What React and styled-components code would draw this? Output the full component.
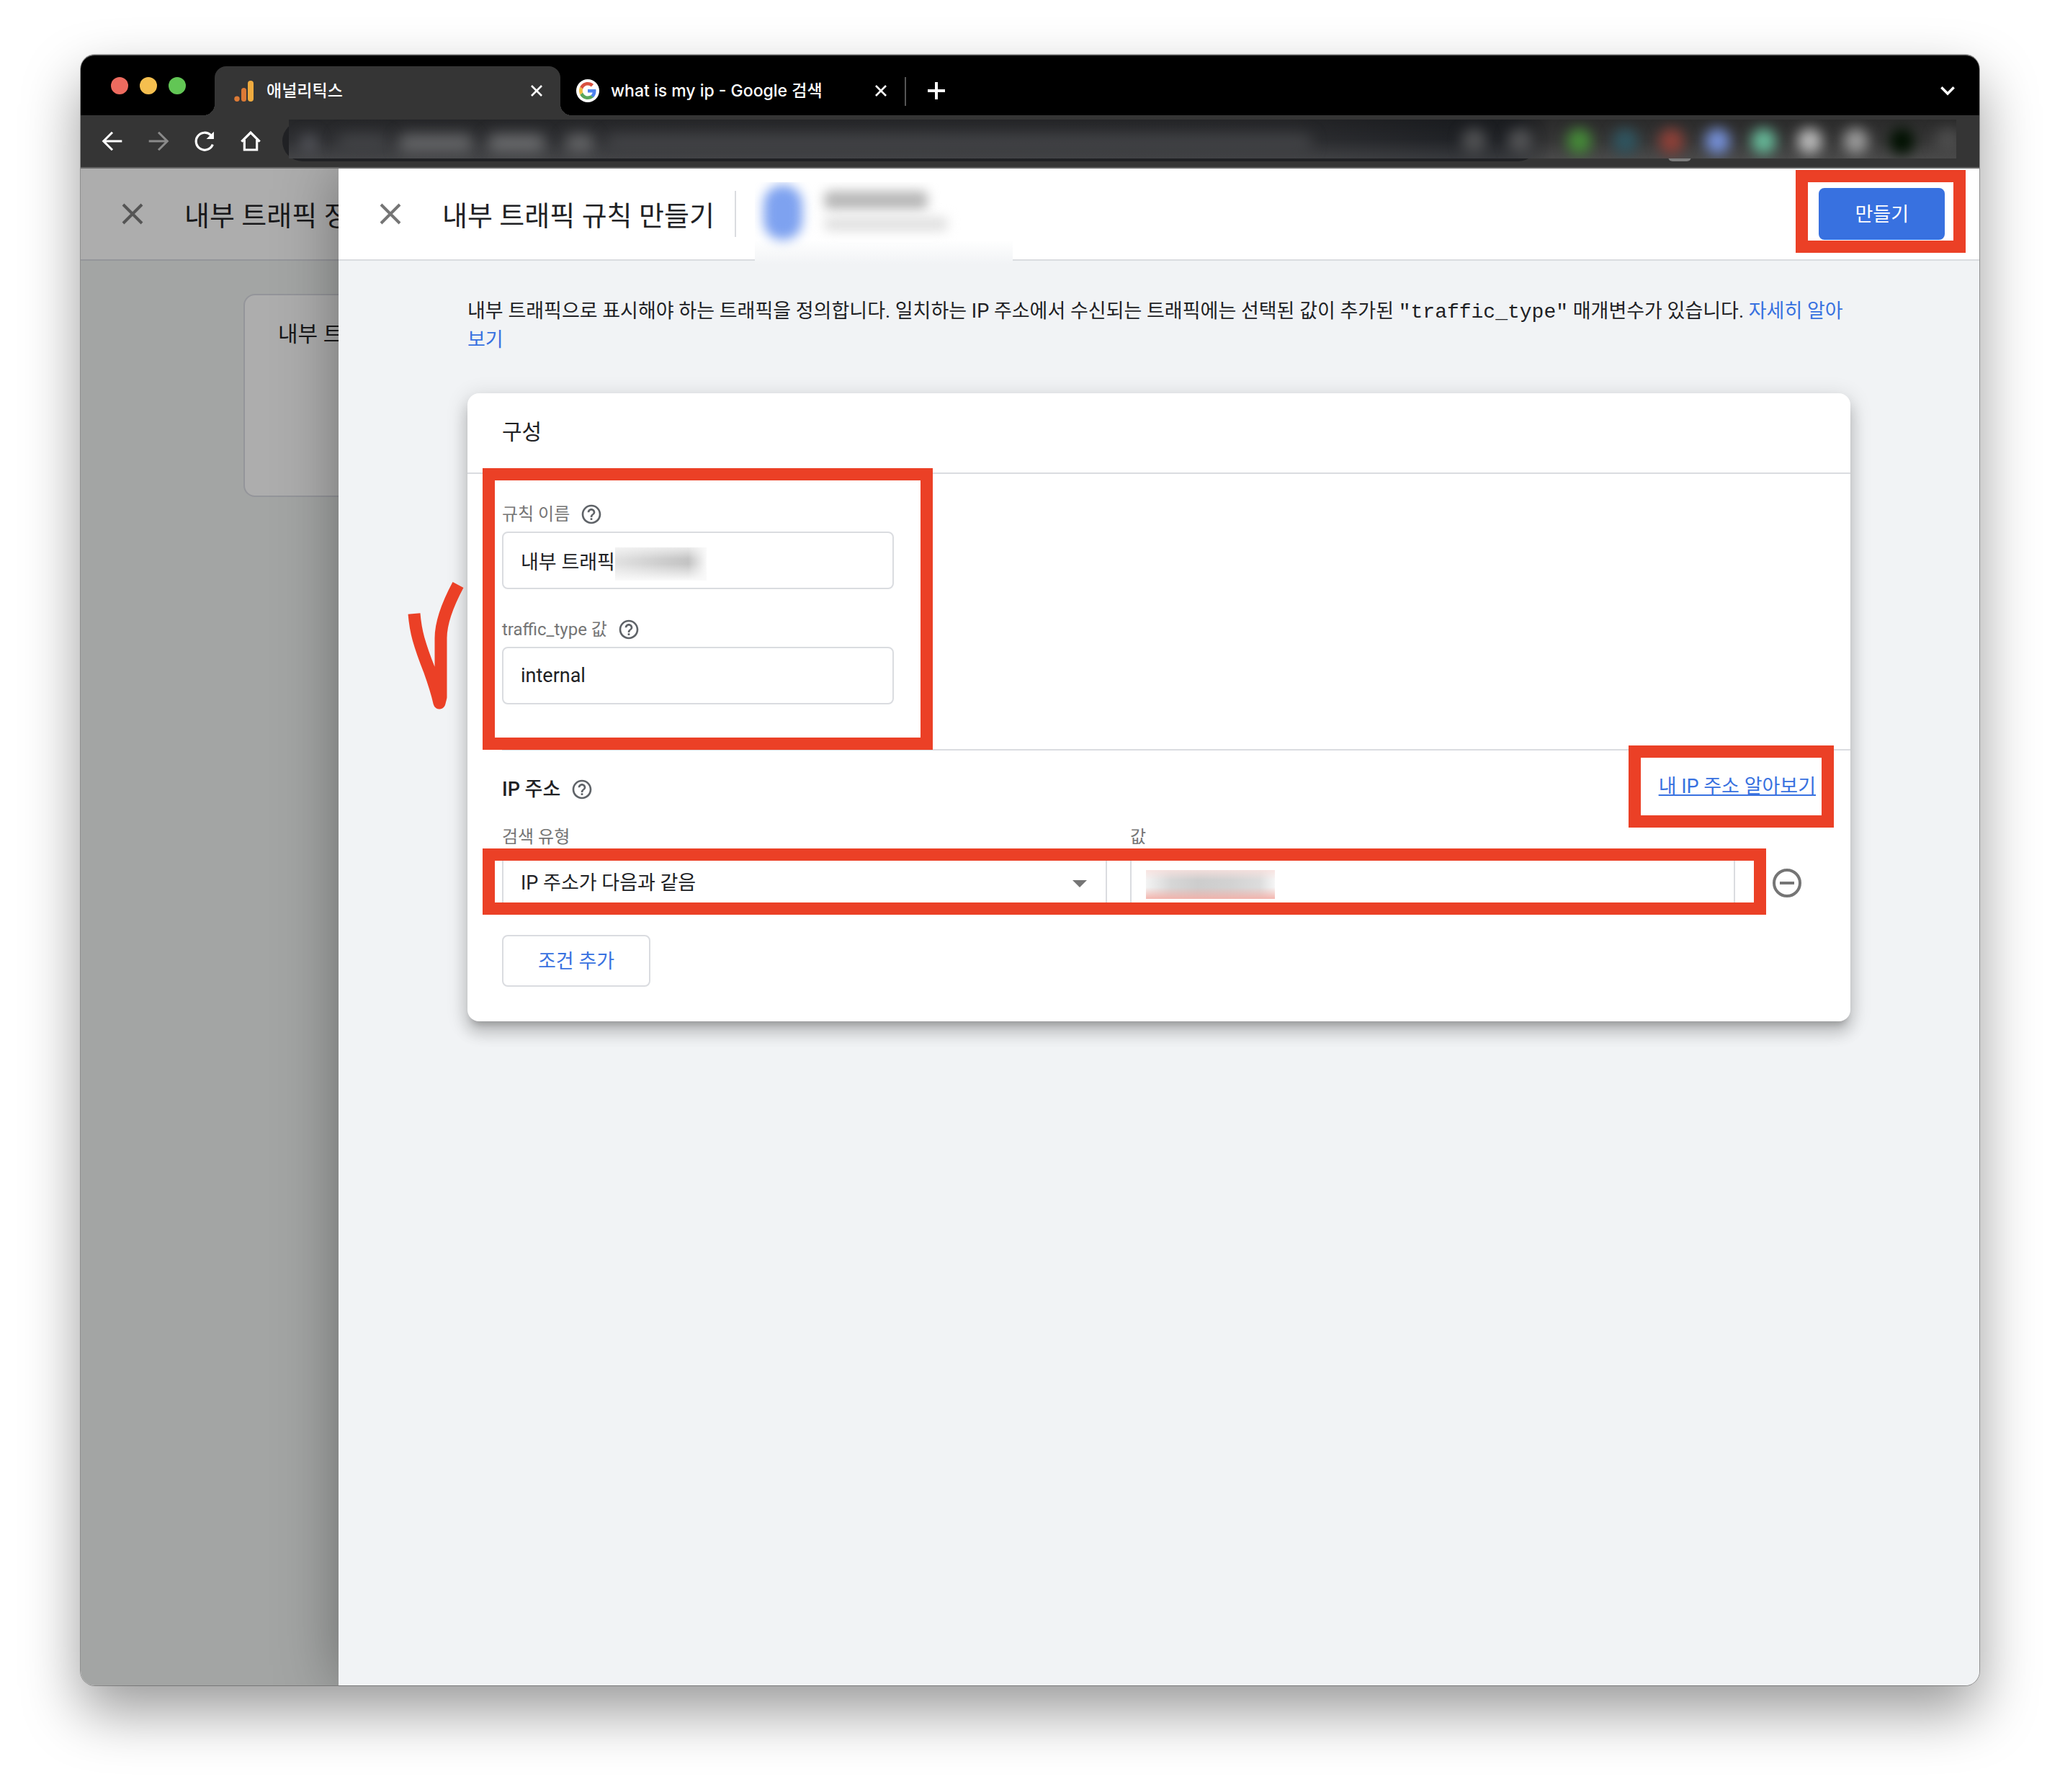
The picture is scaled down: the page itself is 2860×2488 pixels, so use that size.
import React from 'react';
import styled, { createGlobalStyle } from 'styled-components';

const RED = '#eb4026';
const BLUE = '#3871e0';
const LINE = '#dadce0';
const INK = '#202124';

const GlobalStyle = createGlobalStyle`
  *, *::before, *::after { box-sizing: border-box; }
  body { margin: 0; background: #fff; }
  body, button, input, select {
    font-family: Roboto, "Noto Sans CJK KR", sans-serif;
    font-size: 27px;
    color: ${INK};
  }
  h1, h2, h3, p { margin: 0; font-weight: 400; }
`;

const Desktop = styled.div`
  min-height: 100vh;
  padding: 76px 112px 148px;
  display: flex;
`;

const Window = styled.div`
  flex: 1;
  min-width: 0;
  display: flex;
  flex-direction: column;
  border-radius: 20px;
  box-shadow: 0 0 0 1px rgba(0, 0, 0, 0.3), 0 36px 80px rgba(0, 0, 0, 0.4);
`;

/* ---------- browser chrome ---------- */

const TabStrip = styled.div`
  display: flex;
  align-items: flex-end;
  height: 84px;
  padding-right: 28px;
  background: #000;
  border-radius: 20px 20px 0 0;
  box-shadow: inset 0 2px 0 -1px #666;
`;

const Lights = styled.div`
  display: flex;
  gap: 16px;
  width: 186px;
  padding: 0 0 29px 42px;
`;

const Light = styled.span`
  width: 24px;
  height: 24px;
  border-radius: 50%;
  background: ${(p) => p.$color};
`;

const Tab = styled.div`
  position: relative;
  display: flex;
  align-items: center;
  width: ${(p) => (p.$active ? 480 : 478)}px;
  height: 68px;
  padding: 0 20px 0 ${(p) => (p.$active ? 24 : 22)}px;
  gap: 16px;
  border-radius: 16px 16px 0 0;
  background: ${(p) => (p.$active ? '#353535' : 'transparent')};
  ${(p) =>
    p.$active &&
    `
    &::before, &::after {
      content: "";
      position: absolute;
      bottom: 0;
      width: 16px;
      height: 16px;
    }
    &::before { left: -16px; background: radial-gradient(circle at 0 0, transparent 16px, #353535 16px); }
    &::after { right: -16px; background: radial-gradient(circle at 100% 0, transparent 16px, #353535 16px); }
  `}
`;

const TabTitle = styled.span`
  flex: 1;
  font-family: Inter, "Noto Sans CJK KR", sans-serif;
  font-size: 23px;
  font-weight: 500;
  line-height: 32px;
  color: #fff;
  white-space: nowrap;
`;

const IconButton = styled.button`
  display: inline-flex;
  align-items: center;
  justify-content: center;
  flex: none;
  width: ${(p) => p.$size}px;
  height: ${(p) => p.$size}px;
  padding: 0;
  border: 0;
  background: none;
  color: ${(p) => p.$color || '#fff'};
`;

const TabDivider = styled.span`
  width: 2px;
  height: 40px;
  margin-bottom: 13px;
  background: #555;
`;

const StripTools = styled.div`
  display: flex;
  flex: 1;
  align-items: center;
  justify-content: space-between;
  height: 68px;
  padding-left: 26px;
`;

const Toolbar = styled.div`
  display: flex;
  align-items: center;
  height: 74px;
  padding: 0 32px 0 28px;
  gap: 32px;
  background: #353535;
  border-bottom: 2px solid #666;
`;

const NavButtons = styled.div`
  display: flex;
  gap: 32px;
`;

const AddressRow = styled.div`
  position: relative;
  flex: 1;
  display: flex;
  height: 56px;
  margin-left: -4px;
`;

const AddressBar = styled.div`
  flex: 1;
  border-radius: 28px;
  background: #202124;
`;

const ExtensionArea = styled.div`
  width: 580px;
`;

const ExtensionBadge = styled.span`
  position: absolute;
  right: 368px;
  bottom: 0;
  width: 32px;
  height: 12px;
  border-radius: 6px;
  background: #7d7d7d;
`;

const Smear = styled.div`
  position: absolute;
  inset: -2px 0 4px 9px;
  display: flex;
  align-items: center;
  overflow: hidden;
  background:
    linear-gradient(rgba(0, 0, 0, 0.2), rgba(0, 0, 0, 0) 50%, rgba(255, 255, 255, 0.1)),
    linear-gradient(90deg, #2e2f32 0, #2c2d30 60%, #202226 calc(100% - 700px), #202226 calc(100% - 610px), #353535 calc(100% - 560px));
`;

const SmearText = styled.span`
  flex: none;
  width: ${(p) => p.$w}px;
  height: 24px;
  margin-left: ${(p) => p.$gap}px;
  margin-top: 12px;
  border-radius: 10px;
  background: ${(p) => p.$color};
  filter: blur(10px);
`;

const SmearIcons = styled.div`
  display: flex;
  gap: 29px;
  margin-left: auto;
  margin-right: -6px;
  padding-top: 6px;
`;

const SmearDot = styled.span`
  width: 35px;
  height: 36px;
  border-radius: 50%;
  background: ${(p) => p.$color};
  filter: blur(9px);
  &:nth-child(2) { margin-right: 18px; }
`;

/* ---------- page ---------- */

const Content = styled.div`
  flex: 1;
  display: flex;
  overflow: hidden;
  border-radius: 0 0 20px 20px;
`;

const Underlay = styled.div`
  width: 358px;
  flex: none;
  overflow: hidden;
  background: #a3a5a4;
  white-space: nowrap;
`;

const Header = styled.header`
  display: flex;
  align-items: center;
  height: 128px;
  padding: 0 48px;
  background: ${(p) => (p.$dim ? '#adadad' : '#fff')};
  border-bottom: 2px solid ${(p) => (p.$dim ? '#94959a' : LINE)};
`;

const PageTitle = styled.h1`
  margin-left: 48px;
  padding-top: 6px;
  font-size: 38px;
  line-height: 48px;
  color: ${(p) => (p.$dim ? '#18181a' : INK)};
  white-space: nowrap;
`;

const UnderCard = styled.div`
  width: 600px;
  height: 282px;
  margin: 46px 0 0 226px;
  padding: 34px 46px;
  border: 2px solid #94959a;
  border-radius: 16px;
  background: #adadad;
  font-size: 30px;
  line-height: 40px;
  color: #18181a;
`;

const Drawer = styled.main`
  position: relative;
  flex: 1;
  min-width: 0;
  background: #f1f3f5;
  box-shadow: 0 0 80px rgba(0, 0, 0, 0.35);
`;

const HeaderDivider = styled.span`
  width: 2px;
  height: 64px;
  margin: 0 26px 0 28px;
  background: ${LINE};
`;

const AccountBlur = styled.div`
  align-self: flex-start;
  position: relative;
  flex: none;
  width: 358px;
  height: 114px;
  margin-top: 19px;
  overflow: hidden;
  background: linear-gradient(#fff 70%, #f1f3f5);
`;

const AccountSmudge = styled.span`
  position: absolute;
  left: ${(p) => p.$x}px;
  top: ${(p) => p.$y}px;
  width: ${(p) => p.$w}px;
  height: ${(p) => p.$h}px;
  border-radius: ${(p) => p.$r}px;
  background: ${(p) => p.$color};
  filter: blur(8px);
`;

const HeaderActions = styled.div`
  margin-left: auto;
`;

const Marked = styled.div`
  position: relative;
  &::after {
    content: "";
    position: absolute;
    inset: ${(p) => p.$inset};
    border: 17px solid ${RED};
    pointer-events: none;
  }
`;

const Button = styled.button`
  display: block;
  height: 72px;
  padding: 2px 48px 0;
  border: 2px solid ${(p) => (p.$primary ? BLUE : LINE)};
  border-radius: 8px;
  background: ${(p) => (p.$primary ? BLUE : '#fff')};
  color: ${(p) => (p.$primary ? '#fff' : BLUE)};
  line-height: 40px;
`;

const Body = styled.div`
  padding: 50px 179px;
`;

const Intro = styled.p`
  line-height: 40px;
  color: ${INK};
`;

const Code = styled.code`
  font-family: "Liberation Mono", monospace;
  font-size: 28px;
  line-height: 32px;
`;

const TextLink = styled.a`
  color: ${BLUE};
  text-decoration: ${(p) => (p.$underlined ? 'underline' : 'none')};
  line-height: 40px;
  white-space: ${(p) => (p.$underlined ? 'nowrap' : 'normal')};
`;

const Card = styled.section`
  margin-top: 54px;
  border-radius: 16px;
  background: #fff;
  box-shadow: 0 10px 10px -6px rgba(0, 0, 0, 0.2), 0 16px 20px 2px rgba(0, 0, 0, 0.14),
    0 6px 28px 4px rgba(0, 0, 0, 0.12);
`;

const CardTitle = styled.h2`
  height: 112px;
  padding: 32px 48px;
  border-bottom: 2px solid ${LINE};
  font-size: 30px;
  line-height: 44px;
`;

const NameSection = styled.div`
  position: relative;
  margin-left: 48px;
  padding: 40px 0 62px;
  border-bottom: 2px solid ${LINE};
`;

const FieldGroup = styled(Marked)`
  display: flex;
  flex-direction: column;
  gap: 40px;
  width: 544px;
`;

const Field = styled.div`
  display: flex;
  flex-direction: column;
  gap: 8px;
  flex: 1;
`;

const LabelRow = styled.div`
  display: flex;
  align-items: center;
  gap: 14px;
  height: 32px;
`;

const Label = styled.label`
  font-size: 24px;
  line-height: 32px;
  color: #757575;
`;

const Control = styled.div`
  position: relative;
`;

const Input = styled.input`
  display: block;
  width: 100%;
  height: 80px;
  padding: 0 24px;
  border: 2px solid ${LINE};
  border-radius: 8px;
  background: #fff;
  outline: 0;
`;

const Select = styled.select`
  display: block;
  width: 100%;
  height: 80px;
  padding: 0 72px 0 24px;
  border: 2px solid ${LINE};
  border-radius: 8px;
  background: #fff;
  appearance: none;
`;

const Caret = styled.svg`
  position: absolute;
  right: 28px;
  top: 36px;
  width: 20px;
  height: 10px;
  fill: #757575;
  pointer-events: none;
`;

const ValueBlur = styled.span`
  position: absolute;
  left: ${(p) => p.$x}px;
  top: 22px;
  width: ${(p) => p.$w}px;
  height: ${(p) => (p.$alert ? 40 : 46)}px;
  background: ${(p) =>
    p.$alert
      ? 'linear-gradient(rgba(250,225,222,.8), rgba(250,235,232,0) 35%, rgba(250,220,216,0) 60%, rgba(244,176,168,.9)), linear-gradient(90deg, #f3f3f3, #d6d6d6 20%, #cdcdcd 40%, #d2d2d2 65%, #dcdcdc 88%, #f6f6f6)'
      : 'linear-gradient(rgba(250,250,250,.7), rgba(250,250,250,0) 35%, rgba(250,250,250,0) 50%, #fafafa), linear-gradient(90deg, #e2e2e2, #cecece 50%, #c4c4c4 80%, #fafafa)'};
`;

const Conditions = styled.div`
  padding: 30px 48px 48px;
`;

const ConditionsHead = styled.div`
  display: flex;
  justify-content: space-between;
  align-items: flex-end;
  height: 40px;
  margin-bottom: 34px;
`;

const SubTitle = styled.h3`
  font-size: 27px;
  font-weight: 500;
  line-height: 32px;
`;

const LinkBox = styled(Marked)`
  height: 40px;
`;

const ConditionRow = styled.div`
  display: flex;
  align-items: flex-end;
  margin-bottom: 32px;
`;

const ConditionFields = styled(Marked)`
  flex: 1;
  display: flex;
  gap: 32px;
`;

const RemoveCell = styled.div`
  display: flex;
  justify-content: center;
  align-items: center;
  width: 112px;
  height: 80px;
  padding-left: 32px;
`;

const CheckMark = styled.svg`
  position: absolute;
  left: -136px;
  top: 140px;
  width: 90px;
  height: 200px;
  overflow: visible;
  pointer-events: none;
`;

/* ---------- icons ---------- */

const Stroke = ({ size, width = 2, children }) => (
  <svg width={size} height={size} viewBox="0 0 24 24" fill="none" stroke="currentColor" strokeWidth={width}>
    {children}
  </svg>
);

const Cross = ({ size, width }) => (
  <Stroke size={size} width={width}>
    <path d="M5.5 5.5l13 13M18.5 5.5l-13 13" />
  </Stroke>
);

const HelpIcon = () => (
  <svg width="32" height="32" viewBox="0 0 24 24" fill="#5f6368" aria-hidden="true">
    <path d="M11 18h2v-2h-2v2zm1-16C6.48 2 2 6.48 2 12s4.48 10 10 10 10-4.48 10-10S17.52 2 12 2zm0 18c-4.41 0-8-3.59-8-8s3.59-8 8-8 8 3.59 8 8-3.59 8-8 8zm0-14c-2.21 0-4 1.79-4 4h2c0-1.1.9-2 2-2s2 .9 2 2c0 2-3 1.75-3 5h2c0-2.25 3-2.5 3-5 0-2.21-1.79-4-4-4z" />
  </svg>
);

const AnalyticsLogo = () => (
  <svg width="32" height="32" viewBox="0 0 32 32">
    <rect x="22" y="2" width="8" height="29" rx="4" fill="#efab3f" />
    <rect x="13" y="12" width="7" height="19" rx="3.5" fill="#dc7a36" />
    <circle cx="7" cy="27.3" r="3.7" fill="#dc7a36" />
  </svg>
);

const GoogleLogo = () => (
  <svg width="32" height="32" viewBox="0 0 32 32">
    <circle cx="16" cy="16" r="16" fill="#fff" />
    <g transform="translate(4 4)">
      <path fill="#4e83ee" d="M23.5 12.3c0-.9-.1-1.5-.2-2.2H12v4.4h6.6c-.1 1.1-.9 2.8-2.5 3.9l3.8 3c2.3-2.1 3.6-5.2 3.6-9.1z" />
      <path fill="#58a65c" d="M12 24c3.2 0 6-1.1 7.9-2.9l-3.8-2.9c-1 .7-2.4 1.2-4.1 1.2-3.2 0-5.9-2.1-6.8-5L1.3 17.4C3.3 21.3 7.3 24 12 24z" />
      <path fill="#f2bd42" d="M5.2 14.4c-.3-.7-.4-1.5-.4-2.4s.2-1.6.4-2.4L1.3 6.6C.5 8.2 0 10.1 0 12s.5 3.8 1.3 5.4z" />
      <path fill="#d95140" d="M12 4.6c2.3 0 3.8 1 4.7 1.8l3.4-3.3C18 1.2 15.2 0 12 0 7.3 0 3.3 2.7 1.3 6.6l3.9 3c.9-2.900 3.600-5 6.800-5z" />
    </g>
  </svg>
);

const EXTENSIONS = [
  '#4e4f51', '#505153', '#458a38', '#2f5560', '#8e4038', '#7590d8', '#66b898', '#b8b8b8', '#999', '#001000', '#4c4c4c',
];

export default function App() {
  return (
    <>
      <GlobalStyle />
      <Desktop>
        <Window>
          <TabStrip>
            <Lights>
              <Light $color="#ed6b5f" />
              <Light $color="#f5bf4f" />
              <Light $color="#62c655" />
            </Lights>
            <Tab $active>
              <AnalyticsLogo />
              <TabTitle>애널리틱스</TabTitle>
              <IconButton $size={26} aria-label="탭 닫기"><Cross size={28} width={2.4} /></IconButton>
            </Tab>
            <Tab>
              <GoogleLogo />
              <TabTitle>what is my ip - Google 검색</TabTitle>
              <IconButton $size={26} aria-label="탭 닫기"><Cross size={28} width={2.4} /></IconButton>
            </Tab>
            <TabDivider />
            <StripTools>
              <IconButton $size={32} aria-label="새 탭">
                <Stroke size={32} width={3}><path d="M12 3v18M3 12h18" /></Stroke>
              </IconButton>
              <IconButton $size={32} aria-label="탭 검색">
                <Stroke size={32} width={2.6}><path d="M5.5 8.5l6.5 6.5 6.5-6.5" /></Stroke>
              </IconButton>
            </StripTools>
          </TabStrip>

          <Toolbar>
            <NavButtons>
              <IconButton $size={32} aria-label="뒤로">
                <Stroke size={32} width={2.3}><path d="M22 12H3M12 2.8L2.8 12l9.2 9.2" /></Stroke>
              </IconButton>
              <IconButton $size={32} $color="#8a8a8a" aria-label="앞으로">
                <Stroke size={32} width={2.3}><path d="M2 12h19M12 2.8l9.2 9.2-9.2 9.2" /></Stroke>
              </IconButton>
              <IconButton $size={32} aria-label="새로고침">
                <Stroke size={32} width={2.4}>
                  <path d="M20.5 15.5A9 9 0 1 1 18.5 5.8" />
                  <path d="M21.7 2v7.8h-7.8z" fill="currentColor" stroke="none" />
                </Stroke>
              </IconButton>
              <IconButton $size={32} aria-label="홈">
                <Stroke size={32} width={2.4}><path d="M2.5 12.5L12 3l9.5 9.5M5.5 10.5V21h13V10.5" /></Stroke>
              </IconButton>
            </NavButtons>
            <AddressRow>
              <AddressBar />
              <ExtensionArea />
              <ExtensionBadge />
              <Smear>
                <SmearText $w={20} $gap={18} $color="#5c5d64" />
                <SmearText $w={70} $gap={30} $color="#424346" />
                <SmearText $w={104} $gap={14} $color="#666769" />
                <SmearText $w={80} $gap={20} $color="#6c6d6f" />
                <SmearText $w={40} $gap={28} $color="#666769" />
                <SmearText $w={980} $gap={16} $color="#424346" />
                <SmearIcons>
                  {EXTENSIONS.map((color, i) => (
                    <SmearDot key={i} $color={color} />
                  ))}
                </SmearIcons>
              </Smear>
            </AddressRow>
          </Toolbar>

          <Content>
            <Underlay>
              <Header $dim>
                <IconButton $size={48} $color="#555" aria-label="닫기"><Cross size={48} width={2} /></IconButton>
                <PageTitle as="div" $dim>내부 트래픽 정의</PageTitle>
              </Header>
              <UnderCard>내부 트래픽</UnderCard>
            </Underlay>

            <Drawer>
              <Header>
                <IconButton $size={48} $color="#757575" aria-label="닫기"><Cross size={48} width={2} /></IconButton>
                <PageTitle>내부 트래픽 규칙 만들기</PageTitle>
                <HeaderDivider />
                <AccountBlur>
                  <AccountSmudge $x={12} $y={4} $w={54} $h={76} $r={26} $color="#7ea2f0" />
                  <AccountSmudge $x={96} $y={12} $w={144} $h={26} $r={8} $color="#b8b8b8" />
                  <AccountSmudge $x={96} $y={48} $w={172} $h={20} $r={8} $color="#e0e0e0" />
                </AccountBlur>
                <HeaderActions>
                  <Marked $inset="-25px -29px -18px -32px">
                    <Button $primary>만들기</Button>
                  </Marked>
                </HeaderActions>
              </Header>

              <Body>
                <Intro>
                  내부 트래픽으로 표시해야 하는 트래픽을 정의합니다. 일치하는 IP 주소에서 수신되는 트래픽에는 선택된 값이 추가된{' '}
                  <Code>"traffic_type"</Code> 매개변수가 있습니다. <TextLink href="#learn">자세히 알아보기</TextLink>
                </Intro>

                <Card>
                  <CardTitle>구성</CardTitle>
                  <NameSection>
                    <FieldGroup $inset="-48px -54px -63px -27px">
                      <Field>
                        <LabelRow>
                          <Label htmlFor="rule-name">규칙 이름</Label>
                          <HelpIcon />
                        </LabelRow>
                        <Control>
                          <Input id="rule-name" defaultValue="내부 트래픽" />
                          <ValueBlur $x={157} $w={127} />
                        </Control>
                      </Field>
                      <Field>
                        <LabelRow>
                          <Label htmlFor="traffic-type">traffic_type 값</Label>
                          <HelpIcon />
                        </LabelRow>
                        <Control>
                          <Input id="traffic-type" defaultValue="internal" />
                        </Control>
                      </Field>
                    </FieldGroup>
                    <CheckMark viewBox="0 0 90 200" fill="none" stroke={RED} strokeWidth="17" strokeLinejoin="round">
                      <path d="M14 54C15 66 17 78 20 89C24 103 29 117 35 132C40 146 45 160 49 178L51 170V88C51 66 60 42 75 14" />
                    </CheckMark>
                  </NameSection>

                  <Conditions>
                    <ConditionsHead>
                      <LabelRow>
                        <SubTitle>IP 주소</SubTitle>
                        <HelpIcon />
                      </LabelRow>
                      <LinkBox $inset="-37px -25px -37px -42px">
                        <TextLink href="#my-ip" $underlined>내 IP 주소 알아보기</TextLink>
                      </LinkBox>
                    </ConditionsHead>

                    <ConditionRow>
                      <ConditionFields $inset="32px -43px -4px -27px">
                        <Field>
                          <LabelRow>
                            <Label htmlFor="match-type">검색 유형</Label>
                          </LabelRow>
                          <Control>
                            <Select id="match-type" defaultValue="eq">
                              <option value="eq">IP 주소가 다음과 같음</option>
                            </Select>
                            <Caret viewBox="0 0 20 10"><path d="M0 0h20L10 10z" /></Caret>
                          </Control>
                        </Field>
                        <Field>
                          <LabelRow>
                            <Label htmlFor="match-value">값</Label>
                          </LabelRow>
                          <Control>
                            <Input id="match-value" />
                            <ValueBlur $x={22} $w={179} $alert />
                          </Control>
                        </Field>
                      </ConditionFields>
                      <RemoveCell>
                        <IconButton $size={48} $color="#757575" aria-label="조건 삭제">
                          <Stroke size={48}>
                            <circle cx="12" cy="12" r="9" />
                            <path d="M7 12h10" />
                          </Stroke>
                        </IconButton>
                      </RemoveCell>
                    </ConditionRow>

                    <Button>조건 추가</Button>
                  </Conditions>
                </Card>
              </Body>
            </Drawer>
          </Content>
        </Window>
      </Desktop>
    </>
  );
}
